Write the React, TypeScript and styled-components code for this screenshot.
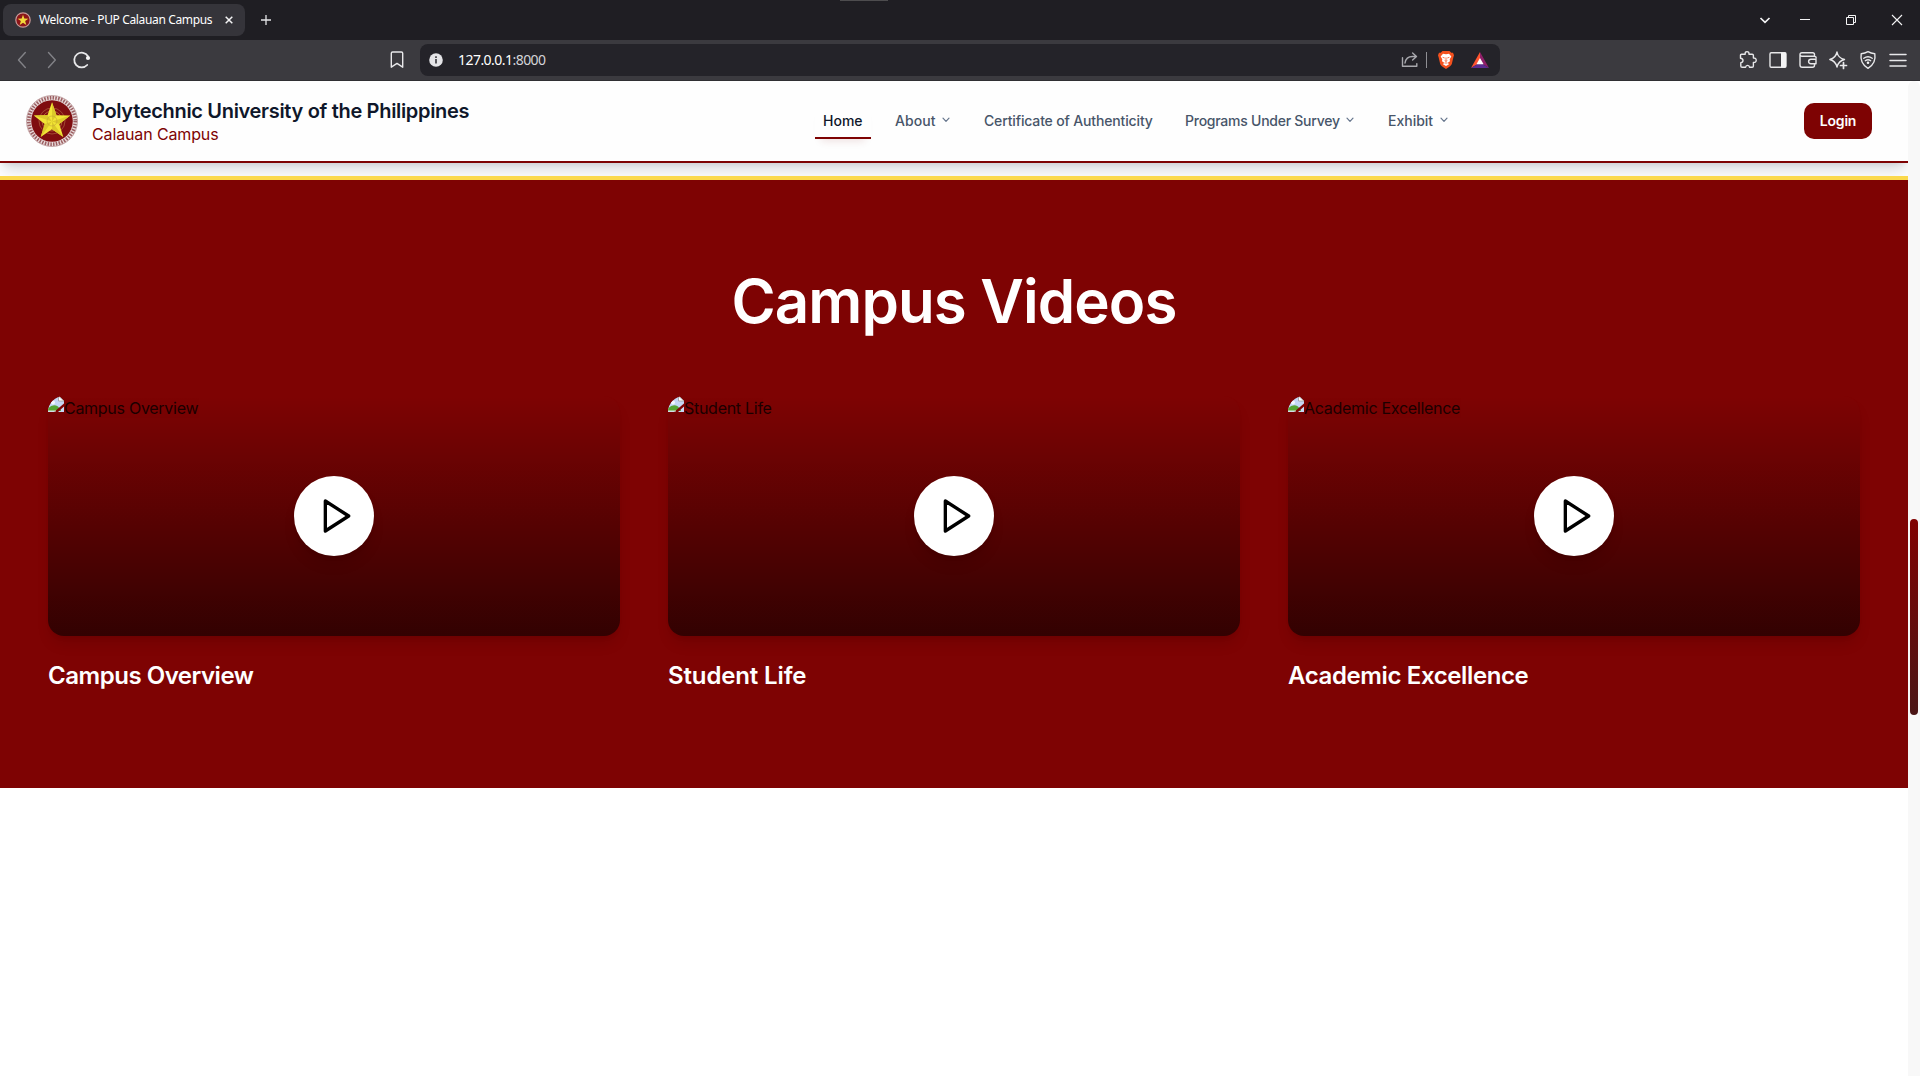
import React from "react";
import styled, { createGlobalStyle } from "styled-components";

const maroon = "#7e0303";

const Global = createGlobalStyle`
  * { box-sizing: border-box; }
  html, body { margin: 0; height: 1076px; overflow: hidden; background: #fff; }
  body { font-family: Inter, "Liberation Sans", sans-serif; }
  svg { display: block; flex: none; }
`;

const Window = styled.div`
  width: 1920px;
  height: 1076px;
  display: flex;
  flex-direction: column;
  overflow: hidden;
`;

const TabStrip = styled.div`
  position: relative;
  height: 40px;
  flex: none;
  background: #1f1e23;
  display: flex;
  align-items: center;
  padding-left: 3px;
  color: #fff;
`;

const DragHandle = styled.div`
  position: absolute;
  top: 0;
  left: 840px;
  width: 48px;
  height: 1px;
  background: #4d4c4e;
`;

const Tab = styled.div`
  width: 242px;
  height: 32px;
  border-radius: 8px;
  background: #35343a;
  display: flex;
  align-items: center;
  padding: 0 11px 0 12px;
`;

const TabTitle = styled.span<{ $ls: number }>`
  font: 12px/16px "Noto Sans", sans-serif;
  letter-spacing: ${(p) => p.$ls}px;
  margin-left: 8px;
  flex: 1;
  white-space: nowrap;
`;

const NewTab = styled.div`
  margin-left: 15px;
`;

const WindowControls = styled.div`
  margin-left: auto;
  display: flex;
  align-items: center;
  gap: 28px;
  padding-right: 14px;
`;

const TabSearch = styled.div`
  margin-right: -3px;
`;

const Toolbar = styled.div`
  height: 41px;
  flex: none;
  background: #3b3a3f;
  border-bottom: 1px solid #302f33;
  display: flex;
  align-items: center;
  padding: 0 12px;
`;

const NavGroup = styled.div`
  display: flex;
  gap: 10px;
  width: 375px;
`;

const AddressBar = styled.div`
  width: 1080px;
  height: 32px;
  border-radius: 8px;
  background: #242329;
  margin-left: 13px;
  display: flex;
  align-items: center;
  padding: 0 11px 0 9px;
`;

const Url = styled.span`
  font: 14px/20px "Noto Sans", sans-serif;
  letter-spacing: -0.54px;
  color: #d4d4d8;
  margin-left: 15px;
  flex: 1;
`;

const Host = styled.span`
  color: #fff;
`;

const Divider = styled.div`
  width: 1px;
  height: 16px;
  background: #8f8f94;
  margin: 0 10px 0 6px;
`;

const BarIcon = styled.div<{ $ml: number }>`
  margin-left: ${(p) => p.$ml}px;
`;

const Extensions = styled.div`
  margin-left: auto;
  display: flex;
  gap: 10px;
`;

const Body = styled.div`
  flex: 1;
  display: flex;
  min-height: 0;
`;

const Page = styled.main`
  width: 1908px;
  background: #fff;
  overflow: hidden;
`;

const Header = styled.header`
  height: 82px;
  border-bottom: 2px solid ${maroon};
  background: #fefefe;
  box-shadow: 0 10px 15px -3px rgba(15, 23, 42, 0.16), 0 4px 6px -4px rgba(15, 23, 42, 0.12);
  display: flex;
  align-items: center;
  padding: 0 36px 0 24px;
`;

const Brand = styled.div`
  width: 791px;
  display: flex;
  align-items: center;
  gap: 12px;
`;

const Seal = styled.div`
  margin-left: 2px;
`;

const BrandText = styled.div`
  display: flex;
  flex-direction: column;
  margin-left: 2px;
  padding-top: 3px;
`;

const University = styled.span`
  font-size: 20px;
  line-height: 24px;
  font-weight: 600;
  color: #0f172a;
  letter-spacing: -0.32px;
`;

const Campus = styled.span`
  font-size: 16px;
  line-height: 23px;
  color: ${maroon};
  letter-spacing: -0.13px;
`;

const Nav = styled.nav`
  display: flex;
  gap: 16px;
`;

const NavLink = styled.a<{ $active?: boolean; $ls: number; $w: number }>`
  width: ${(p) => p.$w}px;
  height: 36px;
  padding: 0 10px 0 8px;
  display: flex;
  align-items: center;
  justify-content: space-between;
  font-size: 14px;
  font-weight: 500;
  white-space: nowrap;
  letter-spacing: ${(p) => p.$ls}px;
  color: ${(p) => (p.$active ? "#0f172a" : "#475569")};
  border-bottom: 2px solid ${(p) => (p.$active ? maroon : "transparent")};
  box-shadow: ${(p) => (p.$active ? "0 8px 8px -6px rgba(127, 3, 4, 0.12)" : "none")};
`;

const Login = styled.button`
  margin-left: auto;
  width: 68px;
  height: 36px;
  border: 0;
  border-radius: 10px;
  background: ${maroon};
  color: #fff;
  font: 600 14px/20px Inter, sans-serif;
  letter-spacing: -0.2px;
  padding: 0;
`;

const Videos = styled.section`
  margin-top: 13px;
  height: 612px;
  border-top: 4px solid #fbd94c;
  background: ${maroon};
  padding: 91px 48px 0;
`;

const Heading = styled.h2`
  margin: 0 0 65px;
  font-size: 60px;
  line-height: 60px;
  font-weight: 600;
  letter-spacing: -0.9px;
  color: #fff;
  text-align: center;
`;

const Grid = styled.div`
  display: grid;
  grid-template-columns: repeat(3, 572px);
  gap: 48px;
`;

const Thumb = styled.div`
  position: relative;
  height: 240px;
  border-radius: 16px;
  overflow: hidden;
  display: grid;
  place-items: center;
  background: linear-gradient(to bottom, rgba(0, 0, 0, 0), rgba(0, 0, 0, 0.6));
`;

const ThumbShadow = styled.div`
  border-radius: 16px;
  background: ${maroon};
  box-shadow: 0 10px 15px -3px rgba(0, 0, 0, 0.1), 0 4px 6px -4px rgba(0, 0, 0, 0.1);
`;

const Alt = styled.div`
  position: absolute;
  left: 0;
  top: 0;
  font-size: 16px;
  line-height: 24px;
  color: #000;
  opacity: 0.78;
  letter-spacing: -0.28px;
`;

const BrokenMark = styled.div`
  position: absolute;
  left: 0;
  top: 0;
`;

const AltText = styled.span`
  margin-left: 16px;
`;

const Play = styled.div`
  width: 80px;
  height: 80px;
  border-radius: 50%;
  background: #fff;
  display: grid;
  place-items: center;
  padding-left: 6px;
  box-shadow: 0 10px 15px -3px rgba(0, 0, 0, 0.1), 0 4px 6px -4px rgba(0, 0, 0, 0.1);
`;

const VideoTitle = styled.h3<{ $ls: number }>`
  margin: 24px 0 0;
  font-size: 24px;
  line-height: 32px;
  font-weight: 600;
  color: #fff;
  letter-spacing: ${(p) => p.$ls}px;
`;

const ScrollTrack = styled.div`
  width: 12px;
  background: #f8f8f8;
  border-radius: 6px 6px 0 0;
  padding: 438px 2px 0;
`;

const ScrollThumb = styled.div`
  height: 196px;
  border-radius: 4px;
  background: linear-gradient(to bottom, #800000, #4a1515);
`;

const line = { fill: "none", stroke: "#e8e8ea", strokeWidth: 1.4, strokeLinecap: "round" as const, strokeLinejoin: "round" as const };

const star = "0,-10 2.35,-3.24 9.51,-3.09 3.8,1.24 5.88,8.09 0,4 -5.88,8.09 -3.8,1.24 -9.51,-3.09 -2.35,-3.24";

const SealIcon = () => (
  <svg width="52" height="52" viewBox="-26 -26 52 52">
    <circle r="25.6" fill="#e9dcdc" />
    <circle r="23.2" fill="none" stroke="#9b5f62" strokeWidth="3.6" strokeDasharray="1.5 1.3" />
    <circle r="25.5" fill="none" stroke="#a87a7c" strokeWidth=".6" />
    <circle r="20.8" fill="#7f0d10" />
    <circle r="13" fill="none" stroke="#a8583a" strokeWidth=".8" />
    <circle r="10" fill="none" stroke="#b5703c" strokeWidth=".8" />
    <g transform="translate(0 .5) scale(1.92)">
      <polygon points={star} fill="#f2e536" />
      <path d="M0 0V-10L2.35 -3.24ZM0 0L9.51 -3.09L3.8 1.24ZM0 0L5.88 8.09L0 4ZM0 0L-5.88 8.09L-3.8 1.24ZM0 0L-9.51 -3.09L-2.35 -3.24Z" fill="#dcc92a" />
    </g>
    <circle r="5" fill="none" stroke="#c3a23a" strokeWidth=".6" />
  </svg>
);

const Favicon = () => (
  <svg width="16" height="16" viewBox="-8 -8 16 16">
    <circle r="7.2" fill="#8c1518" stroke="#c79a98" strokeWidth="1.2" />
    <polygon points={star} fill="#f3d83b" transform="translate(0 .4) scale(.56)" />
  </svg>
);

const Chevron = () => (
  <svg width="8" height="6" viewBox="0 0 8 6">
    <path d="M1 1.2L4 4.3L7 1.2" fill="none" stroke="#64748b" strokeWidth="1.2" strokeLinecap="round" strokeLinejoin="round" />
  </svg>
);

const BrokenImage = () => (
  <svg width="16" height="16" viewBox="0 0 16 16">
    <path d="M0 0H11L16 5V16H0Z" fill="#c5d7f5" />
    <path d="M10.5 0V5H16Z" fill="#fff" stroke="#9a9a9a" strokeWidth=".8" />
    <circle cx="5" cy="6.5" r="2" fill="#f4f8ff" />
    <path d="M0 15V12.5Q5 7 10 10.5L13 14.5V15Z" fill="#55a532" />
    <path d="M6 16L16 7.5V10.5L10 16Z" fill={maroon} />
    <path d="M0 15H8" stroke="#dce6dc" strokeWidth="1" />
  </svg>
);

const PlayIcon = () => (
  <svg width="40" height="40" viewBox="0 0 24 24">
    <polygon points="5 3 19 12 5 21 5 3" fill="none" stroke="#000" strokeWidth="2" strokeLinecap="round" strokeLinejoin="round" />
  </svg>
);

const nav = [
  { label: "Home", w: 56, ls: 0, active: true },
  { label: "About", w: 73, ls: 0.1, menu: true },
  { label: "Certificate of Authenticity", w: 185, ls: -0.15 },
  { label: "Programs Under Survey", w: 187, ls: -0.25, menu: true },
  { label: "Exhibit", w: 78, ls: 0, menu: true },
];

const videos = [
  { title: "Campus Overview", ls: -0.47 },
  { title: "Student Life", ls: -0.13 },
  { title: "Academic Excellence", ls: -0.38 },
];

export default function App() {
  return (
    <Window>
      <Global />
      <TabStrip>
        <DragHandle />
        <Tab>
          <Favicon />
          <TabTitle $ls={-0.36}>Welcome - PUP Calauan Campus</TabTitle>
          <svg width="10" height="10" viewBox="0 0 10 10"><path d="M1.7 1.7L8.3 8.3M8.3 1.7L1.7 8.3" stroke="#f4f4f5" strokeWidth="1.5" /></svg>
        </Tab>
        <NewTab>
          <svg width="12" height="12" viewBox="0 0 12 12"><path d="M6 1V11M1 6H11" stroke="#e5e5e7" strokeWidth="1.3" /></svg>
        </NewTab>
        <WindowControls>
          <TabSearch>
            <svg width="12" height="12" viewBox="0 0 12 12"><path d="M1.5 4L6 8.3L10.5 4" fill="none" stroke="#f4f4f5" strokeWidth="1.7" /></svg>
          </TabSearch>
          <svg width="18" height="12" viewBox="0 0 18 12"><path d="M4 5.5H14" stroke="#f4f4f5" /></svg>
          <svg width="18" height="12" viewBox="0 0 18 12"><path d="M4.5 3.5H11.5V10.5H4.5ZM6.5 3.5V1.5H13.5V8.5H11.5" fill="none" stroke="#f4f4f5" /></svg>
          <svg width="18" height="12" viewBox="0 0 18 12"><path d="M4 1L14 11M14 1L4 11" stroke="#f4f4f5" strokeWidth="1.1" /></svg>
        </WindowControls>
      </TabStrip>
      <Toolbar>
        <NavGroup>
          <svg width="20" height="20" viewBox="0 0 20 20"><path d="M13.3 2.5L6.5 10L13.3 17.5" {...line} stroke="#828287" /></svg>
          <svg width="20" height="20" viewBox="0 0 20 20"><path d="M6.5 2.5L13.3 10L6.5 17.5" {...line} stroke="#828287" /></svg>
          <svg width="20" height="20" viewBox="0 0 20 20">
            <path d="M15.2 15A7.4 7.4 0 1 1 16 6.2" {...line} strokeWidth={1.8} />
            <circle cx="16" cy="8" r="2.1" fill="#f4f4f5" />
          </svg>
        </NavGroup>
        <svg width="20" height="20" viewBox="0 0 20 20"><path d="M4.3 3.3Q4.3 2 5.6 2H14.4Q15.7 2 15.7 3.3V17.2L10 13.4L4.3 17.2Z" {...line} /></svg>
        <AddressBar>
          <svg width="14" height="14" viewBox="0 0 14 14"><circle cx="7" cy="7" r="6.8" fill="#e4e4e7" /><path d="M7 6V10.6M7 3.3V5" stroke="#35343a" strokeWidth="1.6" /></svg>
          <Url><Host>127.0.0.1</Host>:8000</Url>
          <svg width="20" height="20" viewBox="0 0 20 20"><path d="M2.5 7.8V16.3H16.8V13.6M5 13Q6 6.5 12.5 6.5H16M12.6 3L16.5 6.5L12.6 10" {...line} stroke="#a9a9ae" /></svg>
          <Divider />
          <svg width="18" height="20" viewBox="0 0 18 20">
            <path d="M5.5 1H12.5L14.3 2.8L16 2.7L17 5.2L16.4 7.2L14.8 14Q14.2 16 9 19Q3.8 16 3.2 14L1.6 7.2L1 5.2L2 2.7L3.7 2.8Z" fill="#f4511e" />
            <path d="M9 4.2L12 3.8L14.3 6.5L12.7 9.3L13 11.3L10.8 12.8L12 14.2L9 16L6 14.2L7.2 12.8L5 11.3L5.3 9.3L3.7 6.5L6 3.8Z" fill="#fff" />
            <path d="M5.6 7.3L7.7 8M12.4 7.3L10.3 8M9 7.4V11M7.6 10.4L9 11.6L10.4 10.4M7.5 13H10.5" stroke="#f4511e" strokeWidth=".8" fill="none" />
          </svg>
          <BarIcon $ml={16}>
            <svg width="18" height="16" viewBox="0 0 18 16">
              <path d="M9 0L0 16L9 10.5Z" fill="#ff5430" /><path d="M9 0L18 16L9 10.5Z" fill="#8f1f69" /><path d="M0 16H18L9 10.5Z" fill="#5c2d91" /><path d="M9 6L12.6 12.2H5.4Z" fill="#fff" />
            </svg>
          </BarIcon>
        </AddressBar>
        <Extensions>
          <svg width="20" height="20" viewBox="0 0 20 20"><path d="M3.5 4.2H7.2Q6.9 1.6 9 1.6T11 4.2H14.2Q15.4 4.2 15.4 5.4V8Q18.2 7.8 18.2 10.2T15.4 12.4V16Q15.4 17.3 14.2 17.3H11.5Q11.4 15.4 9.6 15.4T7.6 17.3H4.2Q2.8 17.3 2.8 16V12.7Q5 12.4 5 10.5T2.5 8.2V5.2Q2.5 4.2 3.5 4.2Z" {...line} /></svg>
          <svg width="20" height="20" viewBox="0 0 20 20"><rect x="2" y="2.7" width="16" height="14.6" rx="1.2" {...line} /><rect x="13" y="2.7" width="5" height="14.6" fill="#f4f4f5" /></svg>
          <svg width="20" height="20" viewBox="0 0 20 20"><path d="M16.5 6.2V4.6Q16.5 2.7 14.7 2.7H4Q2 2.7 2 4.5V15Q2 17.2 4.2 17.2H14.5Q16.5 17.2 16.5 15.2V13.7M2 4.6Q2 6.2 4 6.2H16.5Q18.2 6.2 18.2 8M18 9.2V13.7H13Q10.6 13.5 10.6 11.4T13 9.2Z" {...line} /></svg>
          <svg width="20" height="20" viewBox="0 0 20 20"><path d="M9 2Q10 8 16.5 9.5Q10.5 11 9 17Q7.5 11 1.8 9.5Q7.8 8 9 2Z" {...line} /><path d="M15.5 12.5V18.5M12.5 15.5H18.5" {...line} strokeWidth={1.7} /></svg>
          <svg width="20" height="20" viewBox="0 0 20 20"><path d="M10 1.7Q13 3.5 16.8 3.7Q18.4 13.5 10 18.3Q1.6 13.5 3.2 3.7Q7 3.5 10 1.7ZM5.8 8.3Q10 5.3 14.2 8.3M7.3 10.7Q10 8.8 12.7 10.7" {...line} /><circle cx="10" cy="12.8" r="1.3" fill="#f4f4f5" /></svg>
          <svg width="20" height="20" viewBox="0 0 20 20"><path d="M2 4.5H18M2 10.5H18M2 16H18" {...line} strokeWidth={1.5} /></svg>
        </Extensions>
      </Toolbar>
      <Body>
        <Page>
          <Header>
            <Brand>
              <Seal><SealIcon /></Seal>
              <BrandText>
                <University>Polytechnic University of the Philippines</University>
                <Campus>Calauan Campus</Campus>
              </BrandText>
            </Brand>
            <Nav>
              {nav.map((n) => (
                <NavLink key={n.label} $w={n.w} $ls={n.ls} $active={n.active}>
                  <span>{n.label}</span>
                  {n.menu && <Chevron />}
                </NavLink>
              ))}
            </Nav>
            <Login>Login</Login>
          </Header>
          <Videos>
            <Heading>Campus Videos</Heading>
            <Grid>
              {videos.map((v) => (
                <article key={v.title}>
                  <ThumbShadow>
                    <Thumb>
                      <BrokenMark><BrokenImage /></BrokenMark>
                      <Alt><AltText>{v.title}</AltText></Alt>
                      <Play><PlayIcon /></Play>
                    </Thumb>
                  </ThumbShadow>
                  <VideoTitle $ls={v.ls}>{v.title}</VideoTitle>
                </article>
              ))}
            </Grid>
          </Videos>
        </Page>
        <ScrollTrack><ScrollThumb /></ScrollTrack>
      </Body>
    </Window>
  );
}
